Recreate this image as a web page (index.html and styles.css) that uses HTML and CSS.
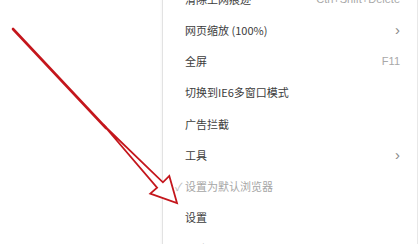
FILE: index.html
```html
<!DOCTYPE html>
<html lang="zh-CN">
<head>
    <meta charset="UTF-8">
    <title>菜单</title>
    <link rel="stylesheet" href="styles.css">
</head>
<body>

    <div class="page">
        <ul class="menu">
            <li class="item"><span>清除上网痕迹</span><span class="key">Ctrl+Shift+Delete</span></li>
            <li class="item"><span>网页缩放 (100%)</span><span class="more">&rsaquo;</span></li>
            <li class="item"><span>全屏</span><span class="key">F11</span></li>
            <li class="item"><span>切换到IE6多窗口模式</span></li>
            <li class="item"><span>广告拦截</span></li>
            <li class="item"><span>工具</span><span class="more">&rsaquo;</span></li>
            <li class="item disabled"><span class="check">&#10003;</span><span>设置为默认浏览器</span></li>
            <li class="item"><span>设置</span></li>
            <li class="item"><span>帮助</span><span class="more">&rsaquo;</span></li>
        </ul>
    </div>

    <!-- annotation arrow drawn over the screenshot -->
    <svg class="arrow" width="420" height="244" viewBox="0 0 420 244">
        <line x1="13" y1="29" x2="106" y2="128" stroke="#c4161c" stroke-width="2.6" stroke-linecap="round"/>
        <polygon points="103.5,125 162.9,182.3 169.3,175.9 177,203 150.3,193.7 157.1,187.7"
                 fill="#ffffff" stroke="#c4161c" stroke-width="1.8" stroke-linejoin="miter"/>
    </svg>

</body>
</html>
```

FILE: styles.css
```css
body {
    margin: 0;
    background: #ffffff;
    font-family: "Noto Sans CJK SC", "Liberation Sans", sans-serif;
    overflow: hidden;
}

.page {
    width: 420px;
    height: 244px;
    overflow: hidden;
    padding-left: 162px;
    box-sizing: border-box;
}

.menu {
    list-style: none;
    margin: -17px 0 0 0;
    padding: 0;
    width: 254px;
    border-left: 1px solid #e2e2e2;
    border-right: 1px solid #e8e8e8;
    background: #ffffff;
    box-shadow: -1px 0 2px rgba(0, 0, 0, 0.04);
}

.item {
    display: flex;
    align-items: center;
    height: 31.25px;
    padding: 0 17px 0 22px;
    font-size: 11px;
    color: #3c3c3c;
    position: relative;
}

.item span:first-child {
    flex: 1;
}

.key {
    color: #a8a8a8;
    font-family: "Liberation Sans", sans-serif;
    font-size: 11px;
}

.more {
    color: #888888;
    font-size: 15px;
    font-family: "Liberation Sans", sans-serif;
    line-height: 1;
}

.disabled {
    color: #a6a6a6;
}

.disabled span:first-child {
    flex: none;
}

.check {
    position: absolute;
    left: 12px;
    color: #bdbdbd;
    font-size: 11px;
}

.arrow {
    position: absolute;
    left: 0;
    top: 0;
}
```
